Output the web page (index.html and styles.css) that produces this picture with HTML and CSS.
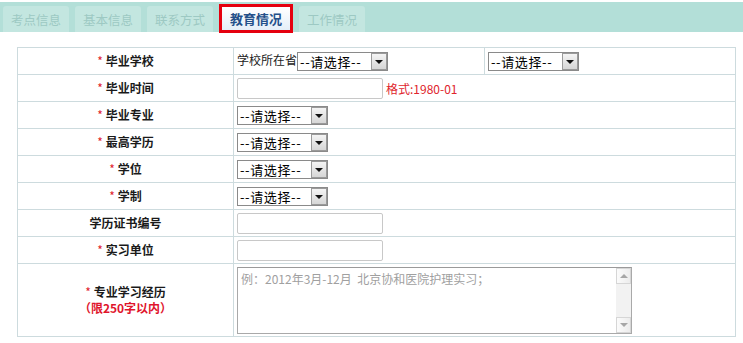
FILE: index.html
```html
<!DOCTYPE html>
<html lang="zh-CN">
<head>
    <meta charset="UTF-8">
    <title>教育情况</title>
    <link rel="stylesheet" href="styles.css">
</head>
<body>
    <div class="tabs">
        <span class="tab">考点信息</span>
        <span class="tab">基本信息</span>
        <span class="tab">联系方式</span>
        <span class="tab active">教育情况</span>
        <span class="tab">工作情况</span>
    </div>

    <table class="form">
        <colgroup>
            <col class="col-label">
            <col class="col-mid">
            <col class="col-right">
        </colgroup>
        <tr class="r-select">
            <th><span class="req">*</span> 毕业学校</th>
            <td>学校所在省<span class="select"><span class="sel-text">--请选择--</span><span class="sel-btn"><i></i></span></span></td>
            <td><span class="select"><span class="sel-text">--请选择--</span><span class="sel-btn"><i></i></span></span></td>
        </tr>
        <tr class="r-input">
            <th><span class="req">*</span> 毕业时间</th>
            <td colspan="2"><input class="text" type="text"><span class="hint">格式:1980-01</span></td>
        </tr>
        <tr class="r-select">
            <th><span class="req">*</span> 毕业专业</th>
            <td colspan="2"><span class="select"><span class="sel-text">--请选择--</span><span class="sel-btn"><i></i></span></span></td>
        </tr>
        <tr class="r-select">
            <th><span class="req">*</span> 最高学历</th>
            <td colspan="2"><span class="select"><span class="sel-text">--请选择--</span><span class="sel-btn"><i></i></span></span></td>
        </tr>
        <tr class="r-select">
            <th><span class="req">*</span> 学位</th>
            <td colspan="2"><span class="select"><span class="sel-text">--请选择--</span><span class="sel-btn"><i></i></span></span></td>
        </tr>
        <tr class="r-select">
            <th><span class="req">*</span> 学制</th>
            <td colspan="2"><span class="select"><span class="sel-text">--请选择--</span><span class="sel-btn"><i></i></span></span></td>
        </tr>
        <tr class="r-input">
            <th>学历证书编号</th>
            <td colspan="2"><input class="text" type="text"></td>
        </tr>
        <tr class="r-input">
            <th><span class="req">*</span> 实习单位</th>
            <td colspan="2"><input class="text" type="text"></td>
        </tr>
        <tr class="r-area">
            <th>
                <div><span class="req">*</span> 专业学习经历</div>
                <div class="limit">（限250字以内）</div>
            </th>
            <td colspan="2">
                <div class="area">
                    <textarea placeholder="例：2012年3月-12月  北京协和医院护理实习；"></textarea>
                    <div class="scroll">
                        <span class="arrow up"></span>
                        <span class="arrow down"></span>
                    </div>
                </div>
            </td>
        </tr>
    </table>
</body>
</html>
```

FILE: styles.css
```css
body {
    margin: 0;
    background: #fff;
    color: #222;
    font-family: "Noto Sans CJK SC", "DejaVu Sans", sans-serif;
    font-size: 12px;
}

.tabs {
    display: flex;
    align-items: flex-end;
    gap: 6px;
    height: 30px;
    margin-top: 2px;
    padding-left: 3px;
    background: #b3dfd8;
}

.tab {
    display: flex;
    align-items: center;
    justify-content: center;
    width: 66px;
    height: 26px;
    background: #c3e6e0;
    color: #9dc9c3;
    font-size: 12.5px;
    border-radius: 3px 3px 0 0;
}

.tab.active {
    width: 68px;
    height: 23px;
    margin-bottom: -1px;
    border: 3px solid #e5000f;
    border-radius: 0;
    background: linear-gradient(#ffffff, #e4eef8);
    color: #24508a;
    font-size: 13px;
    font-weight: bold;
}

.form {
    margin: 15px 0 0 17px;
    width: 719px;
    border-collapse: collapse;
    table-layout: fixed;
}

.col-label { width: 216px; }
.col-mid { width: 251px; }

.form th,
.form td {
    border: 1px solid #cddbde;
    padding: 0 0 0 3px;
}

.form th {
    padding: 0;
    font-weight: bold;
    text-align: center;
    color: #1a1a1a;
    line-height: 16px;
}

.form td {
    white-space: nowrap;
}

.r-select th, .r-select td { height: 26px; }
.r-input th, .r-input td { height: 26px; }
.r-area th, .r-area td { height: 72px; }

.req {
    color: #e0242c;
    font-weight: normal;
}

.limit {
    color: #e0142c;
}

.select {
    display: inline-flex;
    align-items: center;
    justify-content: space-between;
    vertical-align: middle;
    box-sizing: border-box;
    width: 91px;
    height: 19px;
    border: 1px solid #8a8a8a;
    background: #fff;
    color: #000;
}

.sel-text {
    padding-left: 2px;
    font-family: "Noto Sans CJK SC", sans-serif;
    font-size: 13px;
    letter-spacing: 0.6px;
}

.sel-btn {
    display: flex;
    align-items: center;
    justify-content: center;
    box-sizing: border-box;
    width: 16px;
    height: 17px;
    border: 1px solid #9a9a9a;
    background: linear-gradient(#f4f4f4, #d6d6d6);
}

.sel-btn i {
    width: 0;
    height: 0;
    border-left: 4px solid transparent;
    border-right: 4px solid transparent;
    border-top: 4px solid #111;
}

.text {
    box-sizing: border-box;
    width: 146px;
    height: 21px;
    margin: 0;
    border: 1px solid #c8c8c8;
    border-radius: 2px;
    vertical-align: middle;
}

.hint {
    margin-left: 3px;
    color: #e0242c;
    vertical-align: middle;
}

.area {
    display: flex;
    box-sizing: border-box;
    width: 395px;
    height: 67px;
    border: 1px solid #a9a9a9;
    border-top-color: #9a9a9a;
}

.area textarea {
    flex: 1;
    margin: 0;
    padding: 2px 3px;
    border: 0;
    resize: none;
    outline: none;
    overflow: hidden;
    font-family: "Noto Sans CJK SC", sans-serif;
    font-size: 12px;
}

.area textarea::placeholder {
    color: #a0a0a0;
}

.scroll {
    display: flex;
    flex-direction: column;
    justify-content: space-between;
    width: 15px;
    background: #f2f2f2;
}

.arrow {
    position: relative;
    box-sizing: border-box;
    height: 16px;
    border: 1px solid #d6d6d6;
    background: linear-gradient(to right, #fbfbfb, #ececec);
}

.arrow::after {
    content: "";
    position: absolute;
    left: 3px;
    top: 5px;
    border-left: 4px solid transparent;
    border-right: 4px solid transparent;
}

.arrow.up::after { border-bottom: 4px solid #a6a6a6; }
.arrow.down::after { border-top: 4px solid #a6a6a6; }
```
